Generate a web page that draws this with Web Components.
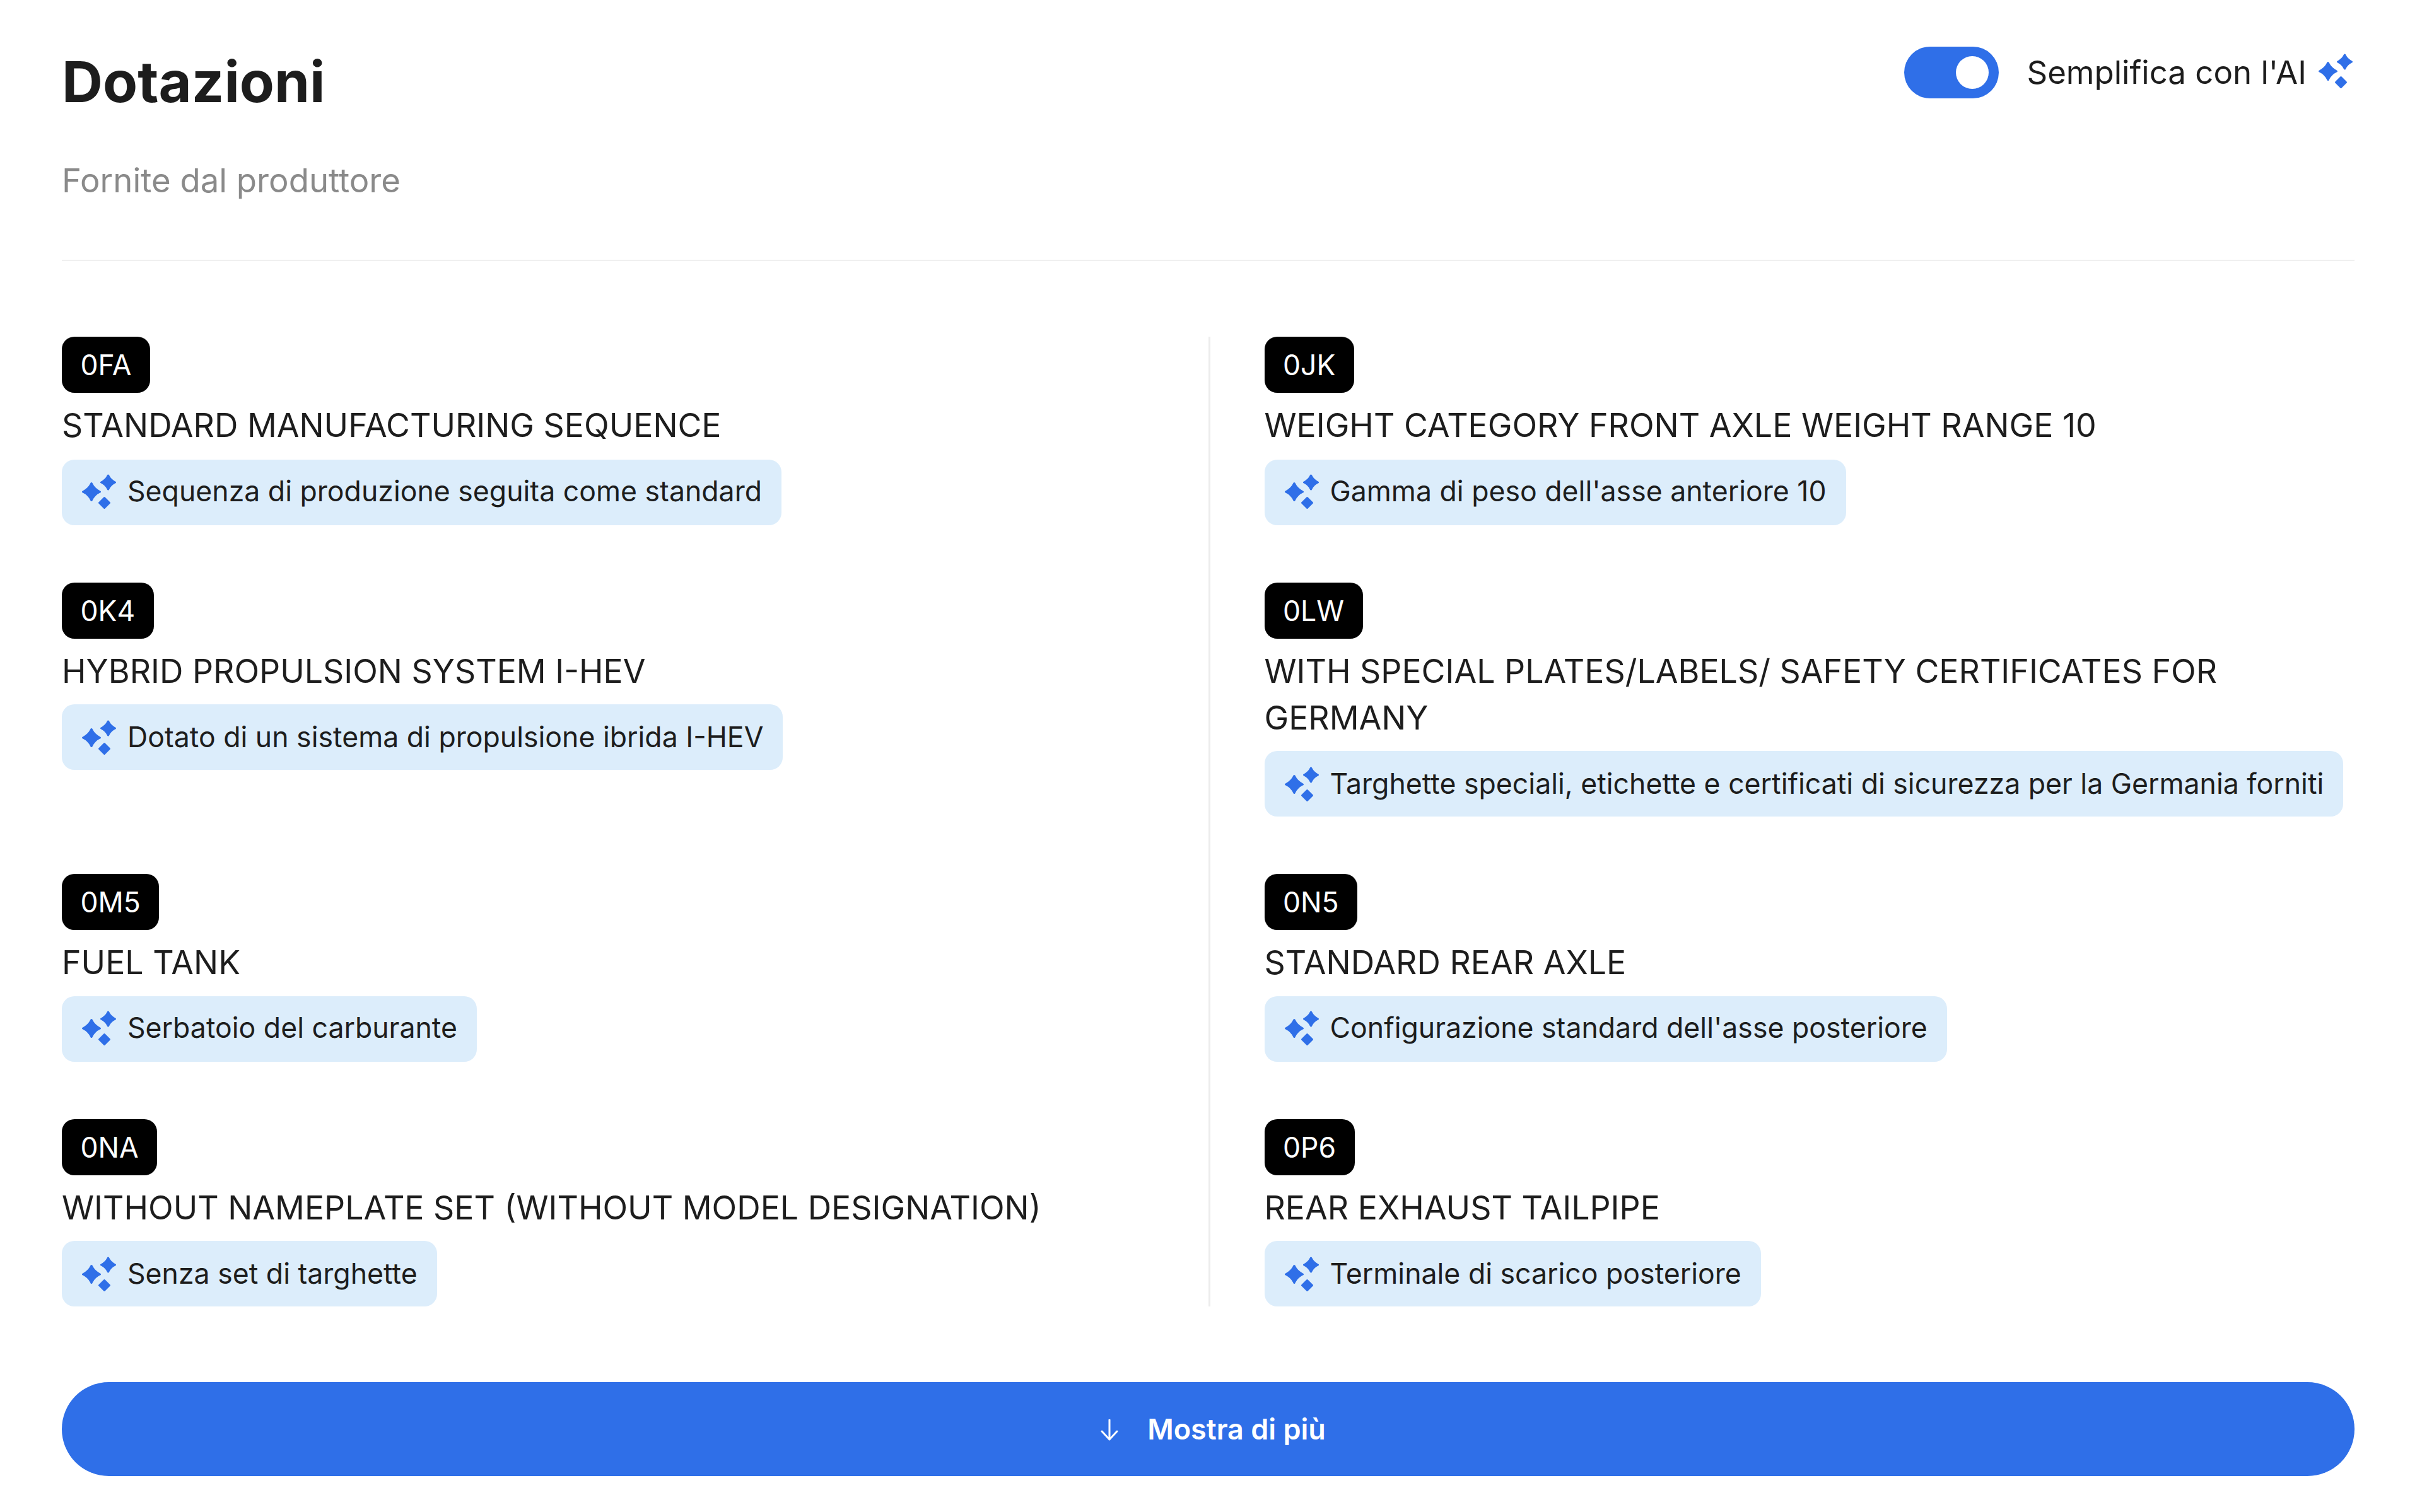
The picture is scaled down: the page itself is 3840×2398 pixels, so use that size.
<!DOCTYPE html>
<html lang="it">
<head>
<meta charset="utf-8">
<title>Dotazioni</title>
<style>
  html, body { margin: 0; background: #fff; }
  body { font-family: Inter, "Liberation Sans", sans-serif; color: #1d1d1d; }
</style>
</head>
<body>
<equipment-panel>
  <span slot="title">Dotazioni</span>
  <span slot="subtitle">Fornite dal produttore</span>
  <ai-toggle slot="action">Semplifica con l'AI</ai-toggle>
  <spec-item style="--name-gap:17px;--chip-lift:4px" code="0FA" name="STANDARD MANUFACTURING SEQUENCE" hint="Sequenza di produzione seguita come standard"></spec-item>
  <spec-item style="--name-gap:17px;--chip-lift:4px" code="0JK" name="WEIGHT CATEGORY FRONT AXLE WEIGHT RANGE 10" hint="Gamma di peso dell'asse anteriore 10"></spec-item>
  <spec-item code="0K4" name="HYBRID PROPULSION SYSTEM I-HEV" hint="Dotato di un sistema di propulsione ibrida I-HEV"></spec-item>
  <spec-item code="0LW" name="WITH SPECIAL PLATES/LABELS/ SAFETY CERTIFICATES FOR GERMANY" hint="Targhette speciali, etichette e certificati di sicurezza per la Germania forniti"></spec-item>
  <spec-item style="--name-gap:16px;--chip-lift:4px" code="0M5" name="FUEL TANK" hint="Serbatoio del carburante"></spec-item>
  <spec-item style="--name-gap:16px;--chip-lift:4px" code="0N5" name="STANDARD REAR AXLE" hint="Configurazione standard dell'asse posteriore"></spec-item>
  <spec-item code="0NA" name="WITHOUT NAMEPLATE SET (WITHOUT MODEL DESIGNATION)" hint="Senza set di targhette"></spec-item>
  <spec-item code="0P6" name="REAR EXHAUST TAILPIPE" hint="Terminale di scarico posteriore"></spec-item>
  <more-button slot="footer">Mostra di più</more-button>
</equipment-panel>

<script>
  function shadow(el, html) {
    el.attachShadow({ mode: 'open' }).innerHTML = html;
  }

  class SparkleIcon extends HTMLElement {
    connectedCallback() {
      if (this.shadowRoot) return;
      const star = (x, y, r, p) => {
        const k = r * p;
        return `M${x} ${y - r}Q${x + k} ${y - k} ${x + r} ${y}Q${x + k} ${y + k} ${x} ${y + r}Q${x - k} ${y + k} ${x - r} ${y}Q${x - k} ${y - k} ${x} ${y - r}Z`;
      };
      shadow(this, `<style>
        :host { display: block; width: 54px; height: 56px; flex: none; }
        svg { display: block; width: 100%; height: 100%; overflow: visible; }
      </style>
      <svg viewBox="0 0 54 56" aria-hidden="true">
        <path fill="#2f6fe8" stroke="#2f6fe8" stroke-width="3" stroke-linejoin="round" d="${star(15, 28, 13.5, 0.32)}${star(41.5, 13, 11, 0.32)}${star(35.5, 45.5, 8, 0.5)}"/>
      </svg>`);
    }
  }

  class AiToggle extends HTMLElement {
    connectedCallback() {
      if (this.shadowRoot) return;
      shadow(this, `<style>
        :host { display: flex; align-items: center; height: 82px; font-size: 51px; line-height: 74px; color: #1d1d1d; }
        .track { display: flex; align-items: center; justify-content: flex-end; box-sizing: border-box; width: 150px; height: 82px; padding-right: 16px; border-radius: 41px; background: #2f6fe8; margin-right: 44px; }
        .knob { width: 52px; height: 52px; border-radius: 50%; background: #fff; }
        sparkle-icon { margin: -4px 3px 0 19px; }
      </style>
      <span class="track"><span class="knob"></span></span>
      <slot></slot>
      <sparkle-icon></sparkle-icon>`);
    }
  }

  class CodeBadge extends HTMLElement {
    connectedCallback() {
      if (this.shadowRoot) return;
      shadow(this, `<style>
        :host { display: inline-flex; align-items: center; height: 89px; padding: 0 29.5px; border-radius: 20px; background: #000; color: #fff; font-size: 44.5px; }
      </style><slot></slot>`);
    }
  }

  class AiChip extends HTMLElement {
    connectedCallback() {
      if (this.shadowRoot) return;
      shadow(this, `<style>
        :host { display: inline-flex; align-items: center; gap: 18px; box-sizing: border-box; height: 104px; padding: 0 31px var(--chip-lift, 0px) 32px; border-radius: 20px; background: #dcedfb; color: #1d1d1d; font-size: 44.6px; white-space: nowrap; }
        sparkle-icon { margin-top: 2px; }
      </style><sparkle-icon></sparkle-icon><slot></slot>`);
    }
  }

  class SpecItem extends HTMLElement {
    connectedCallback() {
      if (this.shadowRoot) return;
      shadow(this, `<style>
        :host { display: flex; flex-direction: column; align-items: flex-start; box-sizing: border-box; }
        .name { font-size: 51.85px; line-height: 74px; color: #1d1d1d; margin: 15px 0 var(--name-gap, 15px); }
      </style>
      <code-badge></code-badge>
      <div class="name"></div>
      <ai-chip></ai-chip>`);
      const r = this.shadowRoot;
      r.querySelector('code-badge').textContent = this.getAttribute('code');
      r.querySelector('.name').textContent = this.getAttribute('name');
      r.querySelector('ai-chip').textContent = this.getAttribute('hint');
    }
  }

  class MoreButton extends HTMLElement {
    connectedCallback() {
      if (this.shadowRoot) return;
      shadow(this, `<style>
        :host { display: flex; align-items: center; justify-content: center; gap: 46px; height: 149px; padding-left: 16px; border-radius: 75px; background: #2f6fe8; color: #fff; font-size: 45px; font-weight: 600; }
        svg { display: block; width: 28px; height: 34px; margin-top: 2px; }
      </style>
      <svg viewBox="0 0 28 34" aria-hidden="true"><path d="M14 1V32M2 19L14 32L26 19" fill="none" stroke="#fff" stroke-width="3" stroke-linecap="round" stroke-linejoin="round"/></svg>
      <slot></slot>`);
    }
  }

  class EquipmentPanel extends HTMLElement {
    connectedCallback() {
      if (this.shadowRoot) return;
      shadow(this, `<style>
        :host { display: block; box-sizing: border-box; padding: 74px 107px 57px 98px; background: #fff; }
        header { display: flex; justify-content: space-between; align-items: flex-start; }
        .title { font-size: 90px; line-height: 106px; font-weight: 700; color: #1d1d1d; margin-top: 3px; }
        .sub { font-size: 52.7px; line-height: 74px; color: #8a8a8a; margin-top: 66px; }
        hr { height: 2px; border: 0; background: #f0f0f0; margin: 89px 0 120px; }
        .grid { display: grid; grid-template-columns: 1fr 1fr; }
        ::slotted(spec-item) { padding-top: 91px; }
        ::slotted(spec-item:nth-of-type(1)), ::slotted(spec-item:nth-of-type(2)) { padding-top: 0; }
        ::slotted(spec-item:nth-of-type(even)) { padding-left: 86px; border-left: 3px solid #ececec; }
        .footer { margin-top: 120px; }
      </style>
      <header>
        <div>
          <div class="title"><slot name="title"></slot></div>
          <div class="sub"><slot name="subtitle"></slot></div>
        </div>
        <slot name="action"></slot>
      </header>
      <hr>
      <div class="grid"><slot></slot></div>
      <div class="footer"><slot name="footer"></slot></div>`);
    }
  }

  customElements.define('sparkle-icon', SparkleIcon);
  customElements.define('ai-toggle', AiToggle);
  customElements.define('code-badge', CodeBadge);
  customElements.define('ai-chip', AiChip);
  customElements.define('spec-item', SpecItem);
  customElements.define('more-button', MoreButton);
  customElements.define('equipment-panel', EquipmentPanel);
</script>
</body>
</html>
